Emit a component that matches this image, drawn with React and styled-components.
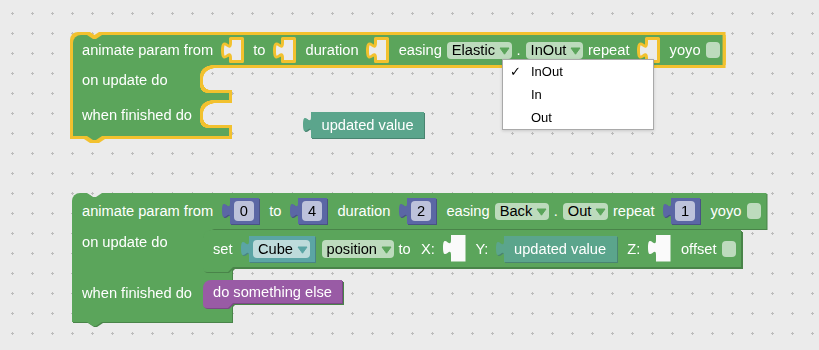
import React from 'react';
import styled, { createGlobalStyle } from 'styled-components';

const COL = {
  bg: '#ebebeb',
  grid: '#bdbdbd',
  loop: '#5ba55b',
  loopDark: '#498449',
  math: '#5b67a5',
  mathDark: '#495284',
  obj: '#5ba5a5',
  objDark: '#498484',
  vari: '#5ba58c',
  variDark: '#498470',
  proc: '#995ba5',
  procDark: '#7a4984',
  select: '#f2c12e',
};

const outline = (c, w) =>
  `drop-shadow(${w}px 0 0 ${c}) drop-shadow(-${w}px 0 0 ${c}) drop-shadow(0 ${w}px 0 ${c}) drop-shadow(0 -${w}px 0 ${c})`;

const GlobalStyle = createGlobalStyle`
  html, body { margin: 0; padding: 0; background: ${COL.bg}; }
  body { font-family: 'Liberation Sans', Arial, sans-serif; }
`;

const Workspace = styled.div`
  position: relative;
  width: 819px;
  height: 350px;
  overflow: hidden;
  background: ${COL.bg};
  font-family: 'Liberation Sans', Arial, sans-serif;
  font-size: 11pt;
  color: #fff;
`;

const GridSvg = styled.svg`
  position: absolute;
  left: 0;
  top: 0;
`;

const Grid = () => (
  <GridSvg width="819" height="350" shapeRendering="crispEdges">
    <defs>
      <pattern id="wsgrid" width="20" height="20" patternUnits="userSpaceOnUse">
        <rect x="11" y="13" width="3" height="1" fill={COL.grid} />
        <rect x="12" y="12" width="1" height="3" fill={COL.grid} />
      </pattern>
    </defs>
    <rect width="819" height="350" fill="url(#wsgrid)" />
  </GridSvg>
);

/* ---------- C shaped block ---------- */

const CBlock = styled.div`
  position: absolute;
  left: ${(p) => p.$x}px;
  top: ${(p) => p.$y}px;
  display: flex;
  flex-direction: column;
  align-items: flex-start;
  filter: ${(p) => (p.$selected ? outline(COL.select, 3) : `drop-shadow(1px 1px 0 ${COL.loopDark})`)};
`;

const Header = styled.div`
  display: flex;
  align-items: center;
  gap: 5px;
  height: ${(p) => p.$h}px;
  padding: 0 ${(p) => p.$pr}px 0 ${(p) => p.$pl}px;
  background: ${COL.loop};
  border-top-left-radius: 8px;
  white-space: nowrap;
  clip-path: polygon(0 0, ${(p) => p.$n}px 0, ${(p) => p.$n + 6}px 4px, ${(p) => p.$n + 9}px 4px,
    ${(p) => p.$n + 15}px 0, 100% 0, 100% 100%, 0 100%);
`;

const StmtRow = styled.div`
  display: flex;
  align-self: stretch;
`;

const StmtLabel = styled.div`
  flex: none;
  width: ${(p) => p.$w}px;
  box-sizing: border-box;
  padding: ${(p) => p.$pt}px 0 0 ${(p) => p.$pl}px;
  line-height: 26px;
  background: ${COL.loop};
  white-space: nowrap;
`;

const Hole = styled.div`
  position: relative;
  flex: 1;
  display: flex;
  align-items: flex-start;
  min-height: ${(p) => p.$h}px;
  box-sizing: border-box;
  padding-top: ${(p) => p.$pt || 0}px;
  &::before {
    content: '';
    position: absolute;
    z-index: 0;
    left: 0;
    top: 0;
    width: 13px;
    height: 10px;
    background: radial-gradient(ellipse 13px 10px at 100% 100%, transparent 96%, ${COL.loop} 100%);
  }
  &::after {
    content: '';
    position: absolute;
    z-index: 0;
    left: 0;
    bottom: 0;
    width: 7px;
    height: 7px;
    background: radial-gradient(circle 7px at 100% 0, transparent 94%, ${COL.loop} 100%);
  }
`;

const Arm = styled.div`
  position: relative;
  width: ${(p) => p.$w}px;
  height: ${(p) => p.$h}px;
  background: ${COL.loop};
  &::after {
    content: ${(p) => (p.$tab ? "''" : 'none')};
    position: absolute;
    left: ${(p) => p.$n}px;
    top: 100%;
    width: 15px;
    height: 4px;
    background: ${COL.loop};
    clip-path: polygon(0 0, 100% 0, 9px 100%, 6px 100%);
  }
`;

/* ---------- inline parts ---------- */

const Label = styled.span`
  white-space: nowrap;
  margin-left: ${(p) => p.$ml || 0}px;
`;

const FieldBox = styled.div`
  display: flex;
  align-items: center;
  height: ${(p) => p.$h || 17}px;
  padding: 0 1.5px 0 5px;
  border-radius: 4px;
  background: rgba(255, 255, 255, 0.6);
  color: #000;
  white-space: nowrap;
`;

const ArrowSvg = styled.svg`
  display: block;
  margin: 2px 0 0 4px;
  flex: none;
`;

const Dropdown = ({ text, color = COL.loop, h }) => (
  <FieldBox $h={h}>
    {text}
    <ArrowSvg width="11" height="8" viewBox="0 0 11 8">
      <path d="M1 1 H10 L5.5 7.2 Z" fill={color} stroke={color} strokeLinejoin="round" strokeWidth="1" />
    </ArrowSvg>
  </FieldBox>
);

const NumberField = styled.div`
  display: flex;
  align-items: center;
  justify-content: center;
  height: 20px;
  padding: 0 6.1px;
  border-radius: 4px;
  background: rgba(255, 255, 255, 0.6);
  color: #000;
`;

const Checkbox = styled.div`
  flex: none;
  width: 14px;
  height: 16px;
  border-radius: 4px;
  background: rgba(255, 255, 255, 0.6);
`;

const SlotSvg = styled.svg`
  display: block;
  flex: none;
  overflow: visible;
  margin: 0 ${(p) => p.$mr}px 0 2.8px;
`;

const Slot = ({ selected }) =>
  selected ? (
    <SlotSvg $mr={4.3} width="23" height="26" viewBox="-1.5 -1.5 23 26">
      <path
        d="M8 0 H20 V23 H8 V19.5 c0,-10 -8,8 -8,-7.5 s8,2.5 8,-7.5 Z"
        fill={COL.bg}
        stroke={COL.select}
        strokeWidth="3"
        strokeLinejoin="round"
      />
    </SlotSvg>
  ) : (
    <SlotSvg $mr={5.3} width="22.5" height="26.5" viewBox="0 0 22.5 26.5">
      <path d="M8 0 H22.5 V26.5 H8 V20 c0,-10 -8,8 -8,-7.5 s8,2.5 8,-7.5 Z" fill="#fafafa" />
    </SlotSvg>
  );

const ValueWrap = styled.div`
  display: flex;
  align-items: stretch;
  flex: none;
  height: ${(p) => p.$h || 26}px;
  margin: 0 ${(p) => (p.$mr === undefined ? 5.3 : p.$mr)}px 0 ${(p) => (p.$ml === undefined ? 3.4 : p.$ml)}px;
  filter: drop-shadow(1px 1px 0 ${(p) => p.$dark});
`;

const KnobSvg = styled.svg`
  display: block;
  flex: none;
  margin-right: -1px;
`;

const ValueBody = styled.div`
  display: flex;
  align-items: center;
  padding: 0 ${(p) => p.$pr}px 0 ${(p) => p.$pl}px;
  background: ${(p) => p.$color};
  color: #fff;
  white-space: nowrap;
`;

const ValueBlock = ({ color, dark, pl = 4, pr = 5, h, ml, mr, children }) => (
  <ValueWrap $dark={dark} $h={h} $ml={ml} $mr={mr}>
    <KnobSvg width="9" height={h || 26} viewBox={`0 0 9 ${h || 26}`}>
      <path d="M9 20 H8 c0,-10 -8,8 -8,-7.5 s8,2.5 8,-7.5 H9 Z" fill={color} />
    </KnobSvg>
    <ValueBody $color={color} $pl={pl} $pr={pr}>
      {children}
    </ValueBody>
  </ValueWrap>
);

const Floating = styled.div`
  position: absolute;
  left: ${(p) => p.$x}px;
  top: ${(p) => p.$y}px;
`;

/* ---------- statement blocks ---------- */

const StmtBlock = styled.div`
  position: relative;
  z-index: 1;
  display: flex;
  align-items: center;
  gap: 5px;
  height: ${(p) => p.$h}px;
  padding: 0 ${(p) => p.$pr}px 0 10px;
  background: ${(p) => p.$color};
  border-top-left-radius: 8px;
  white-space: nowrap;
  filter: drop-shadow(1px 1px 0 ${(p) => p.$dark});
  &::after {
    content: '';
    position: absolute;
    left: 0;
    top: 100%;
    width: 30px;
    height: 5px;
    background: ${(p) => p.$color};
    border-bottom-left-radius: 4px;
    clip-path: polygon(0 0, 100% 0, calc(100% - 5px) 100%, 0 100%);
  }
`;

/* ---------- dropdown menu ---------- */

const Menu = styled.div`
  position: absolute;
  left: 502px;
  top: 59px;
  width: 152px;
  box-sizing: border-box;
  background: #fff;
  border: 1px solid #a9a9a9;
  box-shadow: 0 1px 3px rgba(0, 0, 0, 0.15);
  font-size: 13px;
  color: #000;
`;

const MenuItem = styled.div`
  display: flex;
  align-items: center;
  height: 23px;
  padding-left: 7px;
`;

const CheckCol = styled.span`
  width: 21px;
  flex: none;
  font-family: 'DejaVu Sans', sans-serif;
  font-size: 13px;
`;

export default function App() {
  return (
    <>
      <GlobalStyle />
      <Workspace>
        <Grid />

        {/* selected block */}
        <CBlock $x={73} $y={35} $selected>
          <Header $h={30} $pl={9} $pr={3} $n={14}>
            <Label>animate param from</Label>
            <Slot selected />
            <Label>to</Label>
            <Slot selected />
            <Label>duration</Label>
            <Slot selected />
            <Label>easing</Label>
            <Dropdown text="Elastic" />
            <Label>.</Label>
            <Dropdown text="InOut" />
            <Label>repeat</Label>
            <Slot selected />
            <Label>yoyo</Label>
            <Checkbox />
          </Header>
          <StmtRow>
            <StmtLabel $w={127} $pt={2} $pl={9}>on update do</StmtLabel>
            <Hole $h={28} />
          </StmtRow>
          <Arm $w={156} $h={7} />
          <StmtRow>
            <StmtLabel $w={127} $pt={2} $pl={9}>when finished do</StmtLabel>
            <Hole $h={27} />
          </StmtRow>
          <Arm $w={156} $h={8} $tab $n={14} />
        </CBlock>

        <Floating $x={303} $y={112}>
          <ValueBlock color={COL.vari} dark={COL.variDark} pl={10.5} pr={10.5} ml={0} mr={0}>
            updated value
          </ValueBlock>
        </Floating>

        {/* second block */}
        <CBlock $x={72} $y={193}>
          <Header $h={36} $pl={10} $pr={6} $n={15}>
            <Label>animate param from</Label>
            <ValueBlock color={COL.math} dark={COL.mathDark}>
              <NumberField>0</NumberField>
            </ValueBlock>
            <Label>to</Label>
            <ValueBlock color={COL.math} dark={COL.mathDark}>
              <NumberField>4</NumberField>
            </ValueBlock>
            <Label>duration</Label>
            <ValueBlock color={COL.math} dark={COL.mathDark}>
              <NumberField>2</NumberField>
            </ValueBlock>
            <Label>easing</Label>
            <Dropdown text="Back" />
            <Label>.</Label>
            <Dropdown text="Out" />
            <Label>repeat</Label>
            <ValueBlock color={COL.math} dark={COL.mathDark}>
              <NumberField>1</NumberField>
            </ValueBlock>
            <Label>yoyo</Label>
            <Checkbox />
          </Header>
          <StmtRow>
            <StmtLabel $w={131} $pt={0} $pl={10}>on update do</StmtLabel>
            <Hole $h={38} $pt={1}>
              <StmtBlock $h={37} $pr={5} $color={COL.loop} $dark={COL.loopDark}>
                <Label>set</Label>
                <ValueBlock color={COL.obj} dark={COL.objDark} mr={2}>
                  <Dropdown text="Cube" color={COL.obj} h={18} />
                </ValueBlock>
                <Dropdown text="position" h={18} />
                <Label>to</Label>
                <Label $ml={5.2}>X:</Label>
                <Slot />
                <Label>Y:</Label>
                <ValueBlock color={COL.vari} dark={COL.variDark} pl={10.5} pr={10.5} ml={2.1} mr={5.7}>
                  updated value
                </ValueBlock>
                <Label>Z:</Label>
                <Slot />
                <Label>offset</Label>
                <Checkbox />
              </StmtBlock>
            </Hole>
          </StmtRow>
          <Arm $w={160} $h={13} />
          <StmtRow>
            <StmtLabel $w={131} $pt={0} $pl={10}>when finished do</StmtLabel>
            <Hole $h={23}>
              <StmtBlock $h={23} $pr={10} $color={COL.proc} $dark={COL.procDark}>
                do something else
              </StmtBlock>
            </Hole>
          </StmtRow>
          <Arm $w={160} $h={16} $tab $n={15} />
        </CBlock>

        <Menu>
          <MenuItem>
            <CheckCol>✓</CheckCol>InOut
          </MenuItem>
          <MenuItem>
            <CheckCol />In
          </MenuItem>
          <MenuItem>
            <CheckCol />Out
          </MenuItem>
        </Menu>
      </Workspace>
    </>
  );
}
